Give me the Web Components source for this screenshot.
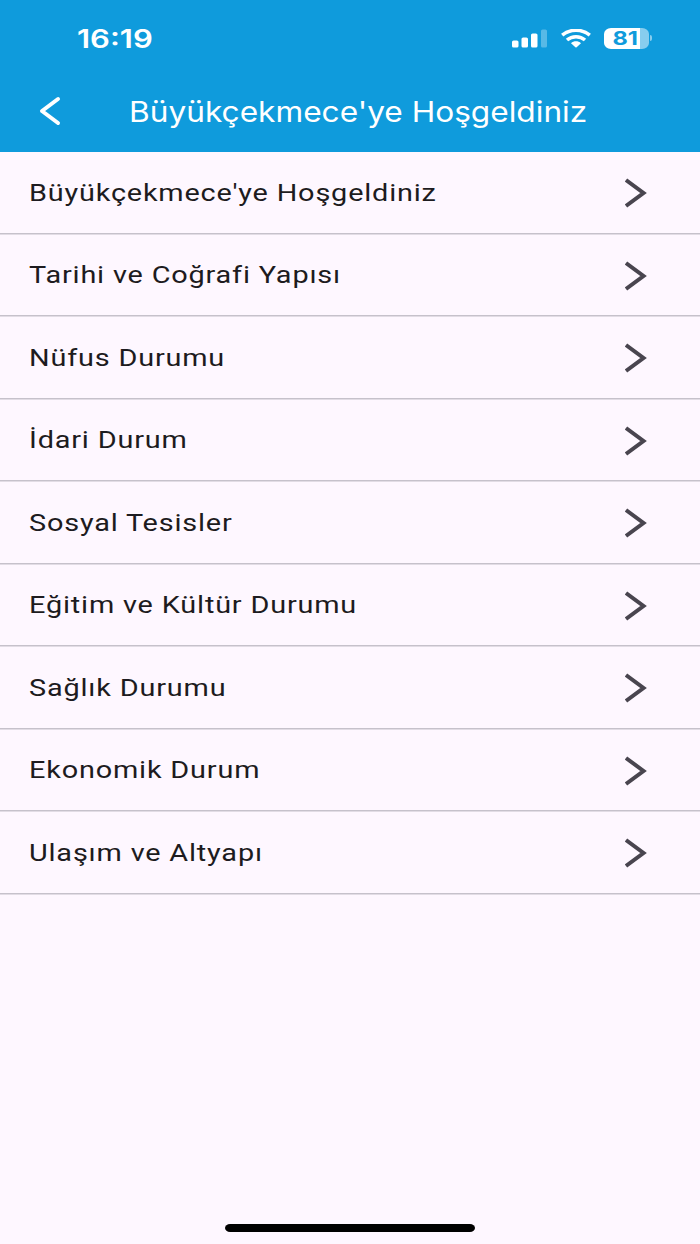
<!DOCTYPE html>
<html lang="tr">
<head>
<meta charset="utf-8">
<meta name="viewport" content="width=device-width, initial-scale=1">
<title>Büyükçekmece'ye Hoşgeldiniz</title>
<style>
    body {
        margin: 0;
        background-color: #fef7ff;
        font-family: Roboto, "Liberation Sans", sans-serif;
    }
</style>
</head>
<body>

<guide-screen>
    <status-bar slot="top" time="16:19" battery="81"></status-bar>
    <app-header slot="top">Büyükçekmece'ye Hoşgeldiniz</app-header>
    <menu-row>Büyükçekmece'ye Hoşgeldiniz</menu-row>
    <menu-row>Tarihi ve Coğrafi Yapısı</menu-row>
    <menu-row>Nüfus Durumu</menu-row>
    <menu-row>İdari Durum</menu-row>
    <menu-row>Sosyal Tesisler</menu-row>
    <menu-row>Eğitim ve Kültür Durumu</menu-row>
    <menu-row>Sağlık Durumu</menu-row>
    <menu-row>Ekonomik Durum</menu-row>
    <menu-row>Ulaşım ve Altyapı</menu-row>
</guide-screen>

<script>
class GuideScreen extends HTMLElement {

    constructor() {
        super();
        this.shadow = this.attachShadow({mode: 'open'});
        this.render();
    }

    render() {
        this.shadow.innerHTML =
        `
        <style>
            :host {
                display: flex;
                flex-direction: column;
                height: 1244px;
                overflow: hidden;
            }

            .top {
                height: 152px;
                background-color: #0f9bdc;
            }

            .list {
                flex: 1;
            }

            .home {
                display: flex;
                justify-content: center;
                height: 20px;
            }

            .home span {
                width: 250px;
                height: 8px;
                border-radius: 5px / 4px;
                background-color: #000;
            }
        </style>

        <div class="top"><slot name="top"></slot></div>
        <main class="list"><slot></slot></main>
        <div class="home"><span></span></div>
        `;
    }
}

class StatusBar extends HTMLElement {

    constructor() {
        super();
        this.shadow = this.attachShadow({mode: 'open'});
        this.render();
    }

    render() {
        this.shadow.innerHTML =
        `
        <style>
            :host {
                display: flex;
                justify-content: space-between;
                align-items: center;
                height: 76px;
                padding: 0 48px 0 77px;
                box-sizing: border-box;
                color: #fff;
                font-family: Inter, "Liberation Sans", sans-serif;
            }

            .time {
                padding-top: 2px;
                font-size: 25px;
                font-weight: 600;
                line-height: 30px;
                transform: scaleX(1.24);
                transform-origin: left;
            }

            .icons {
                display: flex;
                align-items: center;
            }

            .signal { margin-right: 13px; }
            .wifi { margin-right: 13px; }

            .battery {
                display: flex;
                align-items: center;
            }

            .level {
                display: flex;
                align-items: center;
                justify-content: center;
                width: 45px;
                height: 21px;
                border-radius: 7px / 6px;
                background: linear-gradient(to right, #fff 36px, #87cdee 36px);
                color: #0f9bdc;
                font-size: 19px;
                font-weight: 700;
            }

            .level span {
                margin-right: 2px;
                transform: scaleX(1.24);
            }

            .cap {
                width: 2px;
                height: 6px;
                margin-left: 1px;
                border-radius: 0 2px 2px 0;
                background-color: #87cdee;
            }
        </style>

        <div class="time">${this.getAttribute('time')}</div>
        <div class="icons">
            <svg class="signal" width="36" height="19" viewBox="0 0 36 19" fill="#fff">
                <rect x="0" y="11.500" width="6.500" height="7" rx="1.6"/>
                <rect x="9.500" y="8.500" width="6.500" height="10" rx="1.6"/>
                <rect x="19" y="4.500" width="6.500" height="14" rx="1.6"/>
                <rect x="29" y="0.5" width="6" height="18" rx="1.6" opacity="0.3"/>
            </svg>
            <svg class="wifi" width="30" height="19" viewBox="0 0 30 19" fill="none" stroke="#fff">
                <path stroke-width="3.500" d="M1.2 6.2C9-.4 21-.4 28.800 6.200"/>
                <path stroke-width="3.500" d="M6 11C11 6.500 19 6.500 24 11"/>
                <path fill="#fff" stroke="none" d="M10 14.200C12.800 11.700 17.200 11.700 20 14.200L15.600 18.200Q15 18.700 14.400 18.200Z"/>
            </svg>
            <div class="battery">
                <div class="level"><span>${this.getAttribute('battery')}</span></div>
                <div class="cap"></div>
            </div>
        </div>
        `;
    }
}

class AppHeader extends HTMLElement {

    constructor() {
        super();
        this.shadow = this.attachShadow({mode: 'open'});
        this.render();
    }

    render() {
        this.shadow.innerHTML =
        `
        <style>
            :host {
                display: flex;
                align-items: center;
                height: 70px;
                padding-left: 39px;
                color: #fff;
                font-family: Inter, "Liberation Sans", sans-serif;
            }

            svg { margin-right: 67.5px; }

            .title {
                padding-top: 2px;
                font-size: 28px;
                font-weight: 400;
                line-height: 36px;
                white-space: nowrap;
                transform: scaleX(1.13);
                transform-origin: left;
            }
        </style>

        <svg width="22" height="30" viewBox="0 0 22 30" fill="none" stroke="#fff" stroke-width="4" stroke-linecap="round" stroke-linejoin="round">
            <path d="M19 3L3 15L19 27"/>
        </svg>
        <div class="title"><slot></slot></div>
        `;
    }
}

class MenuRow extends HTMLElement {

    constructor() {
        super();
        this.shadow = this.attachShadow({mode: 'open'});
        this.render();
    }

    render() {
        this.shadow.innerHTML =
        `
        <style>
            :host {
                display: flex;
                justify-content: space-between;
                align-items: center;
                height: 82.5px;
                padding: 0 53px 0 29px;
                box-sizing: border-box;
                color: #1d1b20;
                background: linear-gradient(#c6c1cb, #c6c1cb) 0 calc(100% - 0.5px) / 100% 1.5px no-repeat;
            }

            .label {
                padding-bottom: 1px;
                font-size: 23.6px;
                line-height: 30px;
                letter-spacing: 0.67px;
                white-space: nowrap;
                transform: scaleX(1.223);
                transform-origin: left;
            }
        </style>

        <div class="label"><slot></slot></div>
        <svg width="22" height="30" viewBox="0 0 22 30" fill="none" stroke="#49454f" stroke-width="4">
            <path d="M1 2L18.500 15L1 28"/>
        </svg>
        `;
    }
}

customElements.define('guide-screen', GuideScreen);
customElements.define('status-bar', StatusBar);
customElements.define('app-header', AppHeader);
customElements.define('menu-row', MenuRow);
</script>
</body>
</html>
